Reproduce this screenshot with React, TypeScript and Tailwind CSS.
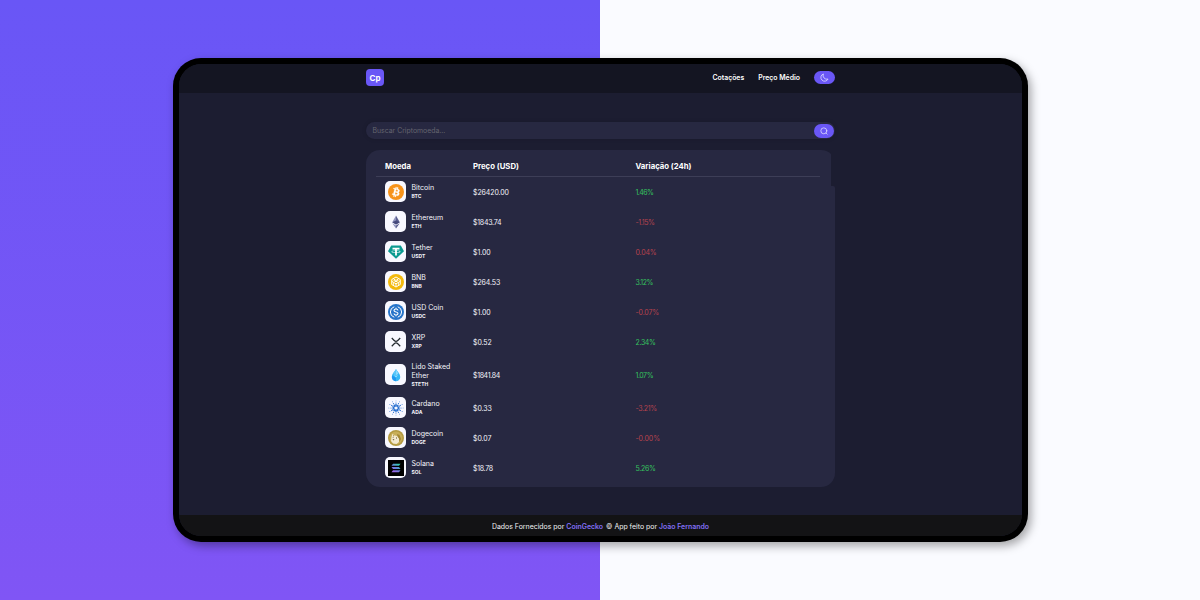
import React from "react";

type Coin = {
  name: string;
  symbol: string;
  price: string;
  priceClass?: string;
  change: string;
  changeClass: string;
  icon: React.ReactNode;
};

function BitcoinIcon() {
  return (
    <svg viewBox="0 0 32 32" className="size-4">
      <circle cx="16" cy="16" r="16" fill="#f7931a" />
      <path
        fill="#fff"
        stroke="#fff"
        strokeWidth="0.5"
        d="M23.2 14c.3-2.100-1.300-3.300-3.500-4l.7-2.900-1.700-.4-.7 2.800-1.400-.3.700-2.800-1.700-.4-.7 2.800-3.500-.9-.5 1.900s1.300.3 1.200.3c.7.200.8.600.8 1l-2 7.900c-.1.200-.3.500-.8.400l-1.200-.3-.9 2 3.400.9-.7 2.900 1.700.4.7-2.900 1.400.4-.7 2.800 1.700.4.700-2.900c3 .6 5.200.3 6.100-2.300.8-2.200 0-3.400-1.600-4.200 1.200-.300 2-1.100 2.500-2.600zm-4 5.600c-.5 2.100-4.100 1-5.300.7l.9-3.800c1.200.3 5 .9 4.400 3.100zm.6-5.700c-.5 1.900-3.500.9-4.500.7l.9-3.400c1 .200 4.100.7 3.600 2.700z"
      />
    </svg>
  );
}

function EthereumIcon() {
  return (
    <svg viewBox="0 0 32 32" className="size-4">
      <path fill="#8d91bd" d="M16 3 8.500 16.500l7.500 4.500z" />
      <path fill="#5a5e90" d="m16 3 7.500 13.500L16 21z" />
      <path fill="#45497c" d="m8.500 16.500 7.500-3.500 7.500 3.500-7.500 4.500z" />
      <path fill="#8b90bd" d="m8.500 18.500 7.500 4.500v6z" />
      <path fill="#5a5e90" d="m23.500 18.500-7.500 4.500v6z" />
    </svg>
  );
}

function TetherIcon() {
  return (
    <svg viewBox="0 0 32 32" className="size-4">
      <path fill="#0b9a91" d="M6.500 3h19L32 14.500 16 29.500 0 14.500z" />
      <path
        fill="#fff"
        d="M9 7.500h14v3.300h-5.200v2.400c4.300.2 7.200 1 7.200 2.100s-2.900 1.900-7.200 2.100V23h-3.600v-5.600c-4.300-.2-7.200-1-7.200-2.100s2.900-1.900 7.200-2.100v-2.400H9z"
      />
      <path
        fill="#0b9a91"
        d="M14.200 14.200v2.100c1.300.1 2.500.1 3.600 0v-2.100c3.400.2 5.800.7 5.800 1.100s-3.500 1.200-7.600 1.200-7.600-.7-7.600-1.200 2.400-.900 5.800-1.100z"
      />
    </svg>
  );
}

function BnbIcon() {
  return (
    <svg viewBox="0 0 32 32" className="size-4">
      <circle cx="16" cy="16" r="16" fill="#f2b90c" />
      <path
        d="m16 6 8.500 5v10L16 26l-8.500-5V11zM12 10.500l4 2.500 4-2.500M8 15l8 4.500 8-4.500M16 19.500V25M11 12.500l5 3 5-3M11 18.500v3M21 18.500v3"
        fill="none"
        stroke="#fff"
        strokeWidth="2"
      />
    </svg>
  );
}

function UsdcIcon() {
  return (
    <svg viewBox="0 0 32 32" className="size-4" fill="none" stroke="#fff">
      <circle cx="16" cy="16" r="16" fill="#2775ca" stroke="none" />
      <path d="M12.500 5.500a11 11 0 0 0 0 21M19.500 5.500a11 11 0 0 1 0 21" strokeWidth="2" />
      <path
        d="M20 13c-.3-2-1.700-3-4-3s-4 1-4 3 1.500 2.600 4 3 4 1 4 3-1.700 3-4 3-3.800-1-4-3M16 7.500V10M16 22v2.500"
        strokeWidth="2.200"
      />
    </svg>
  );
}

function XrpIcon() {
  return (
    <svg viewBox="0 0 32 32" className="size-4" fill="none" stroke="#23292f" strokeWidth="2.400">
      <path d="m7.500 8 4.900 5c2 2 5.200 2 7.200 0l4.900-5M7.500 24.500l4.900-5c2-2 5.200-2 7.200 0l4.900 5" />
    </svg>
  );
}

function LidoIcon() {
  return (
    <svg viewBox="0 0 32 32" className="size-4">
      <path fill="#35b8f6" d="M16 4c3 5 8.500 10 8.500 16a8.500 8.500 0 0 1-17 0C7.500 14 13 9 16 4z" />
      <path fill="#8bd9fd" d="m16 5 5 8.500-5 3-5-3z" />
      <path fill="#58c4fa" d="M16 5v11.500l-5-3z" />
      <path fill="#1f96f0" d="m8.500 17 7.500 4.500v7a8.500 8.500 0 0 1-7.500-11.500z" />
      <path fill="#a5e4ff" d="m12 15.500 4 2.500 4-2.500-4 5.500z" />
    </svg>
  );
}

const rays = [0, 30, 60, 90, 120, 150, 180, 210, 240, 270, 300, 330];

function CardanoIcon() {
  return (
    <svg viewBox="0 0 32 32" className="size-4" fill="#2a71d0">
      {rays.map((a) => (
        <g key={a} transform={`rotate(${a} 16 16)`}>
          <circle cx="16" cy="6" r="1.200" />
          <circle cx="16" cy="1.800" r="0.900" />
        </g>
      ))}
      {rays.filter((a) => a % 60 === 0).map((a) => (
        <g key={a} transform={`rotate(${a} 16 16)`}>
          <circle cx="18.500" cy="11.700" r="2.400" />
          <circle cx="16" cy="8.800" r="1.500" />
        </g>
      ))}
    </svg>
  );
}

function DogeIcon() {
  return (
    <svg viewBox="0 0 32 32" className="size-4">
      <circle cx="16" cy="16" r="16" fill="#b39a40" />
      <circle cx="16" cy="16" r="13" fill="#c8ae58" />
      <path fill="#f3ead0" d="M9 7.500 13 11l6 1 3 5v7l-5 4-7-1-4-5 1-8z" />
      <path fill="#a28733" d="m18 8 5 2 3 8-3 6-1-7-3-4zM10 9.500l2 2-2 2z" />
      <path fill="#5d4a22" d="M9 18.500h4l-2 2.500zM16 15h2v2h-2zM9.500 14.500H11V16H9.500z" />
    </svg>
  );
}

function SolanaIcon() {
  return (
    <svg viewBox="0 0 32 32" className="size-4">
      <defs>
        <linearGradient id="sol" gradientUnits="userSpaceOnUse" x1="8" y1="27" x2="24" y2="6">
          <stop offset="0" stopColor="#b655f5" />
          <stop offset="0.500" stopColor="#687edb" />
          <stop offset="1" stopColor="#19eda0" />
        </linearGradient>
      </defs>
      <rect width="32" height="32" fill="#000" />
      <path
        fill="url(#sol)"
        d="M10 7.500h15l-3 4.200H7zM7 14h15l3 4.200H10zM10 20.500h15l-3 4.200H7z"
      />
    </svg>
  );
}

const UP = "text-[#35c35f]";
const DOWN = "text-[#b8434e]";

const coins: Coin[] = [
  { name: "Bitcoin", symbol: "BTC", price: "$26420.00", change: "1.46%", changeClass: `${UP} tracking-[-0.550px]`, icon: <BitcoinIcon /> },
  { name: "Ethereum", symbol: "ETH", price: "$1843.74", priceClass: "tracking-[-0.250px]", change: "-1.15%", changeClass: `${DOWN} tracking-[-0.400px]`, icon: <EthereumIcon /> },
  { name: "Tether", symbol: "USDT", price: "$1.00", change: "0.04%", changeClass: `${DOWN} tracking-[-0.200px]`, icon: <TetherIcon /> },
  { name: "BNB", symbol: "BNB", price: "$264.53", change: "3.12%", changeClass: `${UP} tracking-[-0.400px]`, icon: <BnbIcon /> },
  { name: "USD Coin", symbol: "USDC", price: "$1.00", change: "-0.07%", changeClass: `${DOWN} tracking-[-0.150px]`, icon: <UsdcIcon /> },
  { name: "XRP", symbol: "XRP", price: "$0.52", change: "2.34%", changeClass: `${UP} tracking-[-0.350px]`, icon: <XrpIcon /> },
  { name: "Lido Staked Ether", symbol: "STETH", price: "$1841.84", priceClass: "tracking-[-0.350px]", change: "1.07%", changeClass: `${UP} tracking-[-0.450px]`, icon: <LidoIcon /> },
  { name: "Cardano", symbol: "ADA", price: "$0.33", change: "-3.21%", changeClass: `${DOWN} tracking-[-0.350px]`, icon: <CardanoIcon /> },
  { name: "Dogecoin", symbol: "DOGE", price: "$0.07", change: "-0.00%", changeClass: `${DOWN} tracking-[-0.100px]`, icon: <DogeIcon /> },
  { name: "Solana", symbol: "SOL", price: "$18.78", priceClass: "tracking-[-0.300px]", change: "5.26%", changeClass: `${UP} tracking-[-0.300px]`, icon: <SolanaIcon /> },
];

function Row({ coin }: { coin: Coin }) {
  const tall = coin.symbol === "STETH";
  return (
    <div
      className={`grid grid-cols-[88px_162.5px_1fr] items-center pl-[19px] text-[7px] text-[#f5f5fb] ${
        tall ? "h-9" : "h-[30px]"
      }`}
    >
      <div className="flex items-center gap-[5.500px] pb-px">
        <div className="flex size-[21px] shrink-0 items-center justify-center rounded-[5px] bg-[#f8f8ff]">
          {coin.icon}
        </div>
        <div className="w-[44px]">
          <div className="text-[7px] leading-[9px]">{coin.name}</div>
          <div className="text-[5px] leading-[8px] font-bold">{coin.symbol}</div>
        </div>
      </div>
      <div className={`pt-[2px] ${coin.priceClass ?? "tracking-[-0.100px]"}`}>{coin.price}</div>
      <div className={`pt-[2px] ${coin.changeClass}`}>{coin.change}</div>
    </div>
  );
}

export default function App() {
  return (
    <div className="flex h-[600px] w-[1200px] bg-[linear-gradient(90deg,transparent_50%,#fafbff_50%),linear-gradient(180deg,#6956f6,#8055f5)] pt-[58px] pl-[173px] font-['Inter',sans-serif]">
      <div className="h-[484px] w-[855px] rounded-[28px] bg-black p-1.5 shadow-[3px_4px_10px_rgba(0,0,0,0.350)]">
        <div className="flex h-full flex-col overflow-hidden rounded-[22px] bg-[#1c1d31]">
          <header className="flex h-[29px] shrink-0 items-center bg-[#141522] pr-[187px] pl-[187px] text-white">
            <div className="-mt-[2px] flex h-[17px] w-[18px] items-center justify-center rounded-[4px] bg-[#6a57f6] text-[8px] font-bold">
              Cp
            </div>
            <nav className="-mt-[2px] ml-auto flex items-center text-[6.900px] font-semibold">
              <span className="pt-[2px]">Cotações</span>
              <span className="ml-[14px] pt-[2px]">Preço Médio</span>
              <button className="ml-[14px] flex h-[13px] w-[21px] items-center justify-center rounded-full bg-[#6a57f6]">
                <svg viewBox="0 0 24 24" className="size-[9px]" fill="none" stroke="#e8e5ff" strokeWidth="2" strokeLinejoin="round">
                  <path d="M9 2.500A10 10 0 1 0 21.500 16 10 10 0 0 1 9 2.500z" />
                </svg>
              </button>
            </nav>
          </header>

          <main className="flex flex-1 flex-col pt-[29px] pl-[187px]">
            <div className="flex h-[17px] w-[469px] items-center justify-between rounded-full bg-[#272841] pr-px pl-[6.500px] shadow-[0_0_4px_rgba(0,0,0,0.150)]">
              <span className="pt-[2px] text-[6.900px] text-[#65656f]">Buscar Criptomoeda...</span>
              <button className="flex h-[14px] w-5 items-center justify-center rounded-full bg-[#6a57f6]">
                <svg viewBox="0 0 24 24" className="size-2" fill="none" stroke="#e8e5ff" strokeWidth="2.200" strokeLinecap="round">
                  <circle cx="11.500" cy="11.500" r="9" />
                  <path d="m18 18 3.500 3.500" />
                </svg>
              </button>
            </div>

            <div className="mt-[11px] flex h-[337px] w-[469px] overflow-hidden rounded-[14px]">
              <div className="w-[465px] bg-[#272841]">
                <div className="mr-[11px] ml-[10px] grid h-[27px] grid-cols-[88px_162.5px_1fr] items-center border-b border-[#3d3e57] pt-[7px] pl-[9px] text-[7.750px] font-bold text-white">
                  <span>Moeda</span>
                  <span>Preço (USD)</span>
                  <span>Variação (24h)</span>
                </div>
                {coins.map((coin) => (
                  <Row key={coin.symbol} coin={coin} />
                ))}
              </div>
              <div className="w-1 pt-9">
                <div className="h-full rounded-tr-[2px] bg-[#272841]" />
              </div>
            </div>
          </main>

          <footer className="flex h-[21px] shrink-0 items-center justify-center bg-[#131315] pt-[3px] text-[6.950px] text-[#f2f2f4]">
            <span>
              Dados Fornecidos por <b className="font-semibold text-[#8270f5]">CoinGecko</b>
            </span>
            <span className="ml-[3px]">
              © App feito por <b className="font-semibold text-[#8270f5]">João Fernando</b>
            </span>
          </footer>
        </div>
      </div>
    </div>
  );
}
